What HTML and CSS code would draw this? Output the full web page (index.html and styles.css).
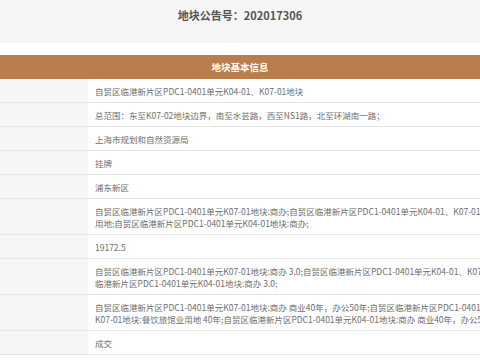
FILE: index.html
```html
<!DOCTYPE html>
<html lang="zh-CN">
<head>
<meta charset="utf-8">
<title>地块公告号：202017306</title>
<link rel="stylesheet" href="styles.css">
</head>
<body>
<div class="top">
  <h1 class="title">地块公告号：202017306</h1>
</div>
<div class="table">
  <div class="head">地块基本信息</div>
  <div class="row"><div class="label"></div><div class="value">自贸区临港新片区PDC1-0401单元K04-01、K07-01地块</div></div>
  <div class="row"><div class="label"></div><div class="value">总范围：东至K07-02地块边界，南至水芸路，西至NS1路，北至环湖南一路；</div></div>
  <div class="row"><div class="label"></div><div class="value">上海市规划和自然资源局</div></div>
  <div class="row"><div class="label"></div><div class="value">挂牌</div></div>
  <div class="row"><div class="label"></div><div class="value">浦东新区</div></div>
  <div class="row"><div class="label"></div><div class="value">自贸区临港新片区PDC1-0401单元K07-01地块:商办;自贸区临港新片区PDC1-0401单元K04-01、K07-01地块:餐饮旅馆业<br>用地;自贸区临港新片区PDC1-0401单元K04-01地块:商办;</div></div>
  <div class="row"><div class="label"></div><div class="value">19172.5</div></div>
  <div class="row"><div class="label"></div><div class="value">自贸区临港新片区PDC1-0401单元K07-01地块:商办 3.0;自贸区临港新片区PDC1-0401单元K04-01、K07-01地块:餐饮旅馆业用地 2.0;自贸区<br>临港新片区PDC1-0401单元K04-01地块:商办 3.0;</div></div>
  <div class="row"><div class="label"></div><div class="value">自贸区临港新片区PDC1-0401单元K07-01地块:商办 商业40年，办公50年;自贸区临港新片区PDC1-0401单元K04-01、<br>K07-01地块:餐饮旅馆业用地 40年;自贸区临港新片区PDC1-0401单元K04-01地块:商办 商业40年，办公50年;</div></div>
  <div class="row"><div class="label"></div><div class="value">成交</div></div>
</div>
</body>
</html>
```
FILE: styles.css
```css
html, body {
  margin: 0;
  padding: 0;
  background: #ffffff;
  overflow: hidden;
  font-family: "Noto Sans CJK SC", "Noto Sans", sans-serif;
}
.top {
  height: 43px;
  background: #f5f5f5;
  display: flex;
  justify-content: center;
  align-items: flex-start;
  padding-top: 7px;
  box-sizing: border-box;
}
.title {
  margin: 0;
  font-size: 11px;
  line-height: 16px;
  font-weight: 700;
  color: #555555;
}
.table {
  width: 480px;
  margin-top: 12px;
}
.head {
  height: 24px;
  background: #ba7d4c;
  color: #ffffff;
  font-size: 9.5px;
  font-weight: 700;
  display: flex;
  align-items: center;
  justify-content: center;
}
.row {
  display: grid;
  grid-template-columns: 88px 1fr;
  border-bottom: 1px solid #e4e4e4;
}
.label {
  background: #f6f6f6;
}
.value {
  padding: 6px 0 5px 7px;
  font-size: 8.5px;
  line-height: 12px;
  color: #6e6e6e;
  white-space: nowrap;
}
```
